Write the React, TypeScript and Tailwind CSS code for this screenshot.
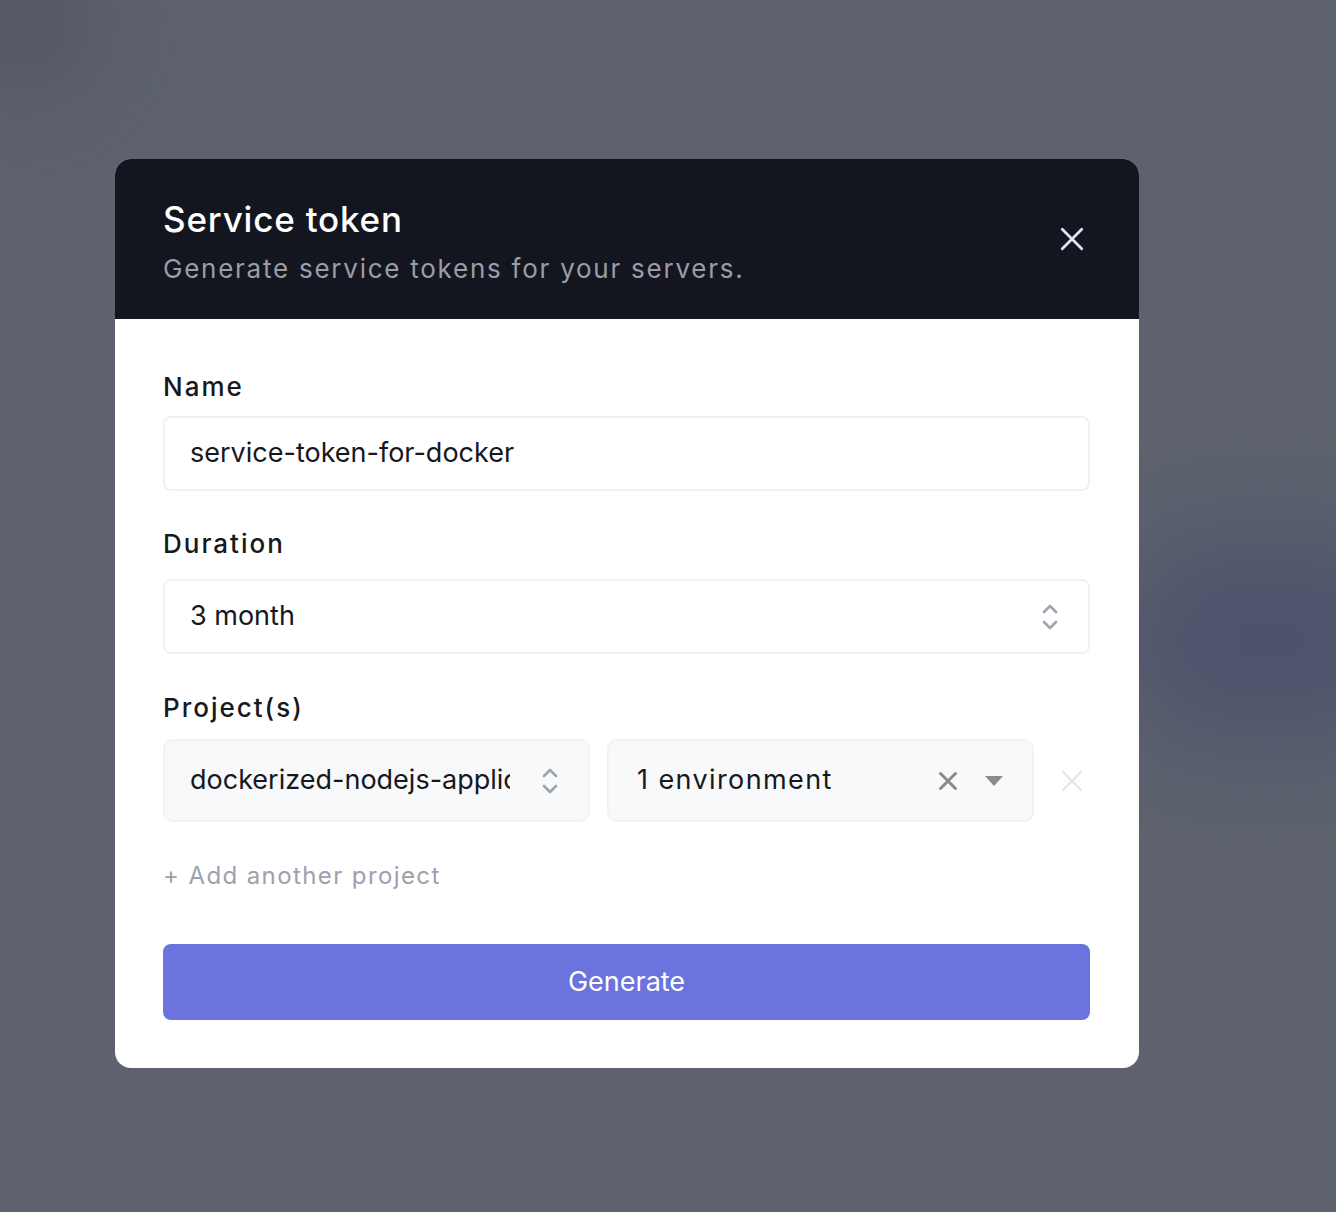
import React from "react";

const font = { fontFamily: "Inter, 'Noto Sans', sans-serif" };

function Chevrons({ className }: { className?: string }) {
  return (
    <svg width="20" height="32" viewBox="0 0 20 32" fill="none" className={className}>
      <path d="M4 11 L10 5 L16 11" stroke="currentColor" strokeWidth="2.6" strokeLinecap="round" strokeLinejoin="round" />
      <path d="M4 21 L10 27 L16 21" stroke="currentColor" strokeWidth="2.6" strokeLinecap="round" strokeLinejoin="round" />
    </svg>
  );
}

function XIcon({ size, stroke, className }: { size: number; stroke: number; className?: string }) {
  return (
    <svg width={size} height={size} viewBox="0 0 24 24" fill="none" className={className}>
      <path d="M3 3 L21 21 M21 3 L3 21" stroke="currentColor" strokeWidth={stroke} strokeLinecap="round" />
    </svg>
  );
}

export default function App() {
  return (
    <div
      className="relative w-[1336px] h-[1212px] overflow-hidden bg-[#5d626e]"
      style={font}
    >
      <div className="absolute left-[1120px] top-[540px] w-[300px] h-[200px] rounded-full bg-[#4a4f6c] blur-[50px] opacity-80" />
      <div className="absolute -left-[60px] -top-[60px] w-[160px] h-[160px] rounded-full bg-[#50545f] blur-[40px] opacity-70" />
      <div className="relative pt-[159px] pl-[115px]">
        <div className="w-[1024px] rounded-[16px] overflow-hidden bg-white">
          <div className="h-[160px] bg-[#13161f] flex items-center justify-between pl-[48px] pr-[54px]">
            <div className="flex flex-col mt-[6px]">
              <div className="text-[35px] leading-[44px] font-medium text-white tracking-[0.8px]">Service token</div>
              <div className="text-[26px] leading-[36px] text-[#9a9da6] tracking-[1.75px] mt-[10px]">
                Generate service tokens for your servers.
              </div>
            </div>
            <XIcon size={26} stroke={2.6} className="text-[#dde3ff]" />
          </div>
          <div className="px-[48px] pt-[52px] pb-[48px] flex flex-col">
            <div className="text-[26px] leading-[32px] font-medium text-[#16181d] tracking-[2px]">Name</div>
            <div className="mt-[13px] w-[927px] h-[75px] rounded-[8px] border-2 border-[#f0f1f3] flex items-center pl-[25px] text-[27px] text-[#16181d]">
              service-token-for-docker
            </div>
            <div className="mt-[37px] text-[26px] leading-[32px] font-medium text-[#16181d] tracking-[2px]">Duration</div>
            <div className="mt-[19px] w-[927px] h-[75px] rounded-[8px] border-2 border-[#f0f1f3] flex items-center justify-between pl-[25px] pr-[28px] text-[27px] text-[#16181d]">
              <span>3 month</span>
              <Chevrons className="text-[#9ea3b0]" />
            </div>
            <div className="mt-[38px] text-[26px] leading-[32px] font-medium text-[#16181d] tracking-[2px]">Project(s)</div>
            <div className="mt-[15px] flex items-center gap-[17px]">
              <div className="w-[427px] h-[83px] rounded-[10px] border-2 border-[#f1f2f4] bg-[#f8f9fb] flex items-center justify-between pl-[25px] pr-[28px] text-[27px] text-[#16181d]">
                <span className="w-[320px] overflow-hidden whitespace-nowrap">dockerized-nodejs-application</span>
                <Chevrons className="text-[#9ea3b0]" />
              </div>
              <div className="w-[427px] h-[83px] rounded-[10px] border-2 border-[#f1f2f4] bg-[#f8f9fb] flex items-center pl-[28px] pr-[28px] text-[27px] text-[#16181d] tracking-[1.4px]">
                <span className="flex-1">1 environment</span>
                <XIcon size={20} stroke={3.6} className="text-[#8b8b8b] mr-[26px]" />
                <svg width="20" height="12" viewBox="0 0 20 12">
                  <path d="M1 1 L19 1 L10 11 Z" fill="#8b8b8b" />
                </svg>
              </div>
              <XIcon size={24} stroke={2} className="text-[#e3e3e3] ml-[9px]" />
            </div>
            <div className="mt-[39px] text-[24px] leading-[30px] text-[#9ca1ad] tracking-[1.4px]">+ Add another project</div>
            <div className="mt-[53px] w-[927px] h-[76px] rounded-[8px] bg-[#6b73de] flex items-center justify-center text-[27px] text-white">
              Generate
            </div>
          </div>
        </div>
      </div>
    </div>
  );
}
